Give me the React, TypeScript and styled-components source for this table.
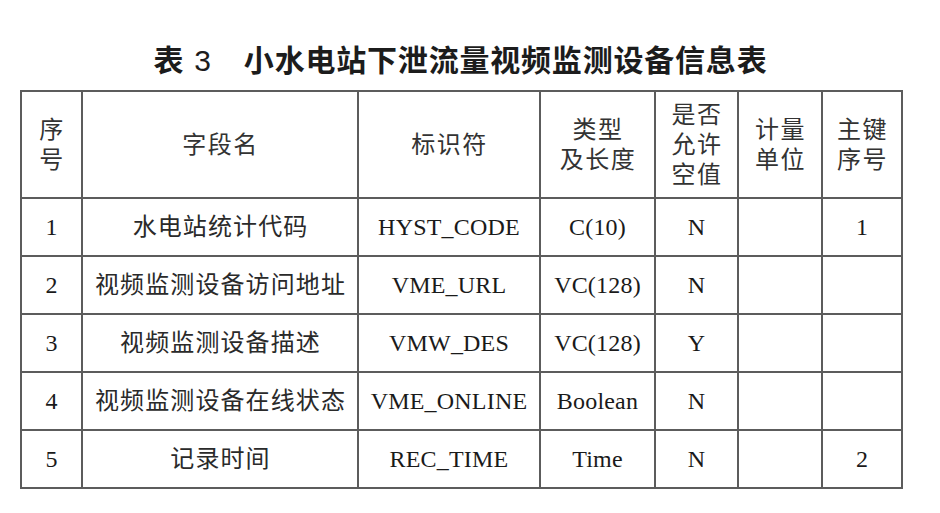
import styled, { createGlobalStyle } from "styled-components";

const GlobalStyle = createGlobalStyle`
  html, body {
    margin: 0;
    padding: 0;
    background: #ffffff;
  }
`;

const Page = styled.div`
  width: 940px;
  padding: 38px 0 0 20px;
  box-sizing: border-box;
`;

const Title = styled.h1`
  margin: 0 0 12px 0;
  width: 881px;
  height: 40px;
  line-height: 40px;
  text-align: center;
  font-family: "Noto Sans CJK SC", "Liberation Sans", sans-serif;
  font-weight: 700;
  font-size: 30px;
  letter-spacing: 0.8px;
  color: #1c1c1c;
`;

const TitleNum = styled.span`
  font-family: "Liberation Sans", "Noto Sans CJK SC", sans-serif;
  font-weight: 400;
  margin-left: 10px;
  margin-right: 32px;
`;

const Table = styled.table`
  border-collapse: collapse;
  table-layout: fixed;
  width: 881px;
  font-family: "Liberation Serif", "Noto Sans CJK SC", serif;
  font-size: 24px;
  color: #1e1e1e;
`;

const HeadRow = styled.tr`
  height: 107px;
`;

const BodyRow = styled.tr`
  height: 58px;
`;

const Cell = styled.td<{ $cjk?: boolean }>`
  border: 2px solid #5c5c5c;
  padding: 0;
  text-align: center;
  vertical-align: middle;
  line-height: 28px;
  white-space: nowrap;
  letter-spacing: ${(p) => (p.$cjk ? "1.1px" : "0.2px")};
  padding-left: ${(p) => (p.$cjk ? "1px" : "0")};
  color: ${(p) => (p.$cjk ? "#2a2a2a" : "#1a1a1a")};
`;

const HeadCell = styled(Cell)`
  line-height: 30px;
  font-weight: 400;
  letter-spacing: 1.5px;
  color: #333333;
`;

const widths = [61, 276, 182, 115, 83, 84, 80];

const header = [
  ["序", "号"],
  ["字段名"],
  ["标识符"],
  ["类型", "及长度"],
  ["是否", "允许", "空值"],
  ["计量", "单位"],
  ["主键", "序号"],
];

const rows = [
  ["1", "水电站统计代码", "HYST_CODE", "C(10)", "N", "", "1"],
  ["2", "视频监测设备访问地址", "VME_URL", "VC(128)", "N", "", ""],
  ["3", "视频监测设备描述", "VMW_DES", "VC(128)", "Y", "", ""],
  ["4", "视频监测设备在线状态", "VME_ONLINE", "Boolean", "N", "", ""],
  ["5", "记录时间", "REC_TIME", "Time", "N", "", "2"],
];

export default function App() {
  return (
    <>
      <GlobalStyle />
      <Page>
        <Title>
          表<TitleNum>3</TitleNum>小水电站下泄流量视频监测设备信息表
        </Title>
        <Table>
          <colgroup>
            {widths.map((w, i) => (
              <col key={i} style={{ width: w }} />
            ))}
          </colgroup>
          <thead>
            <HeadRow>
              {header.map((lines, i) => (
                <HeadCell as="th" key={i} $cjk>
                  {lines.map((l, j) => (
                    <div key={j}>{l}</div>
                  ))}
                </HeadCell>
              ))}
            </HeadRow>
          </thead>
          <tbody>
            {rows.map((r, i) => (
              <BodyRow key={i}>
                {r.map((v, j) => (
                  <Cell key={j} $cjk={j === 1}>
                    {v}
                  </Cell>
                ))}
              </BodyRow>
            ))}
          </tbody>
        </Table>
      </Page>
    </>
  );
}
